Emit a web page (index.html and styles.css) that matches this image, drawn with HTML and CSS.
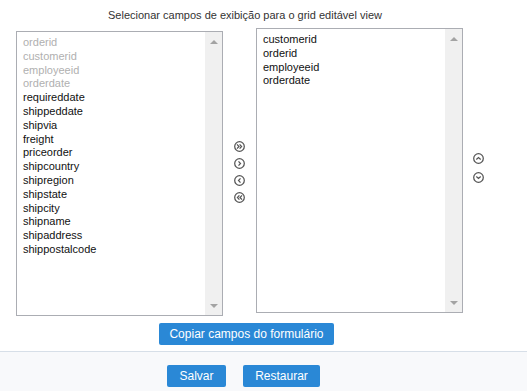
FILE: index.html
```html
<!DOCTYPE html>
<html lang="pt">

<head>
    <meta charset="UTF-8">
    <title>Campos de exibição</title>
    <link rel="stylesheet" href="styles.css">
</head>

<body>
    <div class="page">
        <div class="title">Selecionar campos de exibição para o grid editável view</div>

        <div class="picker">
            <div class="list list-left">
                <div class="items">
                    <div class="item off">orderid</div>
                    <div class="item off">customerid</div>
                    <div class="item off">employeeid</div>
                    <div class="item off">orderdate</div>
                    <div class="item">requireddate</div>
                    <div class="item">shippeddate</div>
                    <div class="item">shipvia</div>
                    <div class="item">freight</div>
                    <div class="item">priceorder</div>
                    <div class="item">shipcountry</div>
                    <div class="item">shipregion</div>
                    <div class="item">shipstate</div>
                    <div class="item">shipcity</div>
                    <div class="item">shipname</div>
                    <div class="item">shipaddress</div>
                    <div class="item">shippostalcode</div>
                </div>
                <div class="scroll"><span class="arrow-up"></span><span class="arrow-down"></span></div>
            </div>

            <div class="moves">
                <svg class="icon" viewBox="0 0 11 11"><circle cx="5.5" cy="5.5" r="4.8"/><polyline points="3,3.3 5,5.5 3,7.7"/><polyline points="5.6,3.3 7.6,5.5 5.6,7.7"/></svg>
                <svg class="icon" viewBox="0 0 11 11"><circle cx="5.5" cy="5.5" r="4.8"/><polyline points="4.5,3.3 6.5,5.5 4.5,7.7"/></svg>
                <svg class="icon" viewBox="0 0 11 11"><circle cx="5.5" cy="5.5" r="4.8"/><polyline points="6.5,3.3 4.5,5.5 6.5,7.7"/></svg>
                <svg class="icon" viewBox="0 0 11 11"><circle cx="5.5" cy="5.5" r="4.8"/><polyline points="5.4,3.3 3.4,5.5 5.4,7.7"/><polyline points="8,3.3 6,5.5 8,7.7"/></svg>
            </div>

            <div class="list list-right">
                <div class="items">
                    <div class="item">customerid</div>
                    <div class="item">orderid</div>
                    <div class="item">employeeid</div>
                    <div class="item">orderdate</div>
                </div>
                <div class="scroll"><span class="arrow-up"></span><span class="arrow-down"></span></div>
            </div>

            <div class="order">
                <svg class="icon" viewBox="0 0 11 11"><circle cx="5.5" cy="5.5" r="4.8"/><polyline points="3.3,6.5 5.5,4.5 7.7,6.5"/></svg>
                <svg class="icon" viewBox="0 0 11 11"><circle cx="5.5" cy="5.5" r="4.8"/><polyline points="3.3,4.5 5.5,6.5 7.7,4.5"/></svg>
            </div>
        </div>

        <div class="copy-row">
            <button type="button" class="btn btn-copy">Copiar campos do formulário</button>
        </div>
    </div>

    <div class="footer">
        <button type="button" class="btn btn-save">Salvar</button>
        <button type="button" class="btn btn-reset">Restaurar</button>
    </div>
</body>

</html>
```

FILE: styles.css
```css
body {
    margin: 0;
    font-family: 'Liberation Sans', Arial, sans-serif;
    color: #222;
    background-color: #fff;
}

.page {
    width: 490px;
}

.title {
    padding-top: 9px;
    font-size: 11px;
    line-height: 13px;
    text-align: center;
    color: #333;
}

.picker {
    display: flex;
    align-items: flex-start;
    margin-top: 6px;
    padding-left: 16px;
}

.list {
    display: flex;
    width: 207px;
    height: 285px;
    box-sizing: border-box;
    border: 1px solid #abadb3;
    background-color: #fff;
}

.list-left {
    margin-top: 3px;
}

.items {
    flex: 1;
    padding: 4px 0 0 6px;
    font-size: 11px;
    line-height: 13.8px;
    color: #111;
}

.item.off {
    color: #b0b0b0;
}

.scroll {
    position: relative;
    width: 17px;
    background-color: #f0f0f0;
}

.arrow-up,
.arrow-down {
    position: absolute;
    left: 5px;
    width: 0;
    height: 0;
    border-left: 4px solid transparent;
    border-right: 4px solid transparent;
}

.arrow-up {
    top: 8px;
    border-bottom: 4px solid #a3a3a3;
}

.arrow-down {
    bottom: 7px;
    border-top: 4px solid #a3a3a3;
}

.moves {
    display: flex;
    flex-direction: column;
    align-items: center;
    gap: 6px;
    width: 33px;
    align-self: center;
}

.order {
    display: flex;
    flex-direction: column;
    gap: 8px;
    margin-left: 10px;
    align-self: center;
    margin-top: -8px;
}

.icon {
    width: 11px;
    height: 11px;
    fill: none;
    stroke: #555;
    stroke-width: 1.25;
}

.copy-row {
    padding: 7px 0 6px 159px;
}

.btn {
    height: 22px;
    padding: 0;
    font-family: 'Liberation Sans', Arial, sans-serif;
    font-size: 12px;
    color: #fff;
    background-color: #2a88d6;
    border: none;
    border-radius: 2px;
    cursor: pointer;
}

.btn-copy {
    width: 175px;
}

.footer {
    display: flex;
    gap: 17px;
    height: 40px;
    box-sizing: border-box;
    padding: 13px 0 0 167px;
    border-top: 1px solid #d7dfe8;
    background-color: #f8f9fb;
}

.btn-save {
    width: 59px;
}

.btn-reset {
    width: 77px;
}
```
